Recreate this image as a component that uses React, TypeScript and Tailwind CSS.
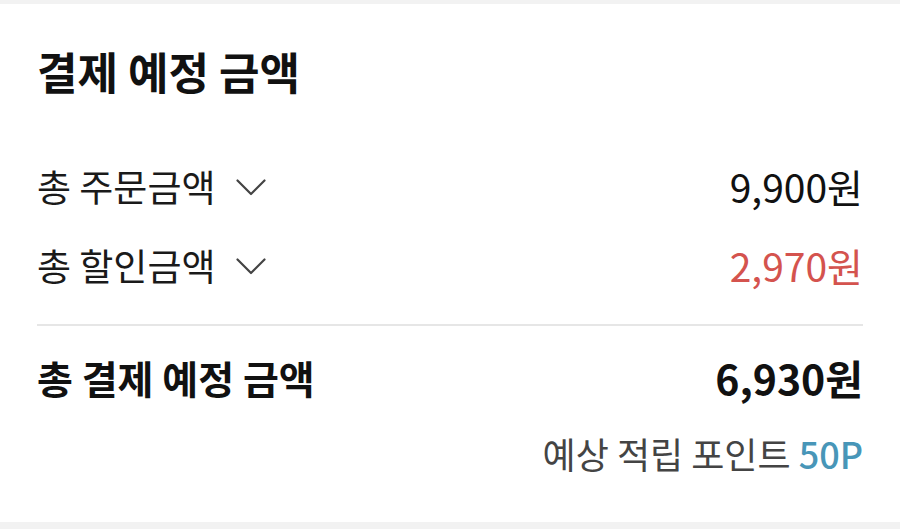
type Row = { label: string; value: string; danger?: boolean };

const rows: Row[] = [
  { label: "총 주문금액", value: "9,900원" },
  { label: "총 할인금액", value: "2,970원", danger: true },
];

const font = { fontFamily: '"Noto Sans CJK KR", "Noto Sans", sans-serif' };

function Chevron() {
  return (
    <svg width="30" height="17" viewBox="0 0 30 17" fill="none" className="mt-[2px]">
      <polyline points="1.5,1.5 15,15 28.5,1.5" stroke="#444" strokeWidth="2.2" strokeLinecap="round" strokeLinejoin="round" />
    </svg>
  );
}

export default function App() {
  return (
    <div className="w-[900px] h-[529px] bg-[#f2f2f2] pt-[4px] pb-[7px] overflow-hidden" style={font}>
      <section className="h-full bg-white px-[37px]">
        {/* heading */}
        <h2 className="pt-[41px] text-[44px] leading-[53px] font-bold text-[#111]">
          결제 예정 금액
        </h2>

        {/* breakdown rows */}
        <div className="mt-[64px] flex flex-col gap-[31px]">
          {rows.map((row) => (
            <div key={row.label} className="flex items-center justify-between h-[48px]">
              <button className="flex items-center gap-[20px] text-[37px] leading-[48px] text-[#1a1a1a]">
                {row.label}
                <Chevron />
              </button>
              <span
                className={
                  row.danger
                    ? "text-[39px] leading-[48px] text-[#d4534e]"
                    : "text-[39px] leading-[48px] text-[#111]"
                }
              >
                {row.value}
              </span>
            </div>
          ))}
        </div>

        <hr className="mt-[35px] border-t-2 border-[#e6e6e6]" />

        {/* total */}
        <div className="mt-[26px] flex items-center justify-between h-[50px]">
          <span className="text-[39px] leading-[50px] font-bold text-[#111]">총 결제 예정 금액</span>
          <span className="text-[41px] leading-[50px] font-bold text-[#111]">6,930원</span>
        </div>

        <p className="mt-[29px] text-right text-[36px] leading-[44px] text-[#444]">
          예상 적립 포인트 <span className="text-[#4896b8] font-medium">50P</span>
        </p>
      </section>
    </div>
  );
}
